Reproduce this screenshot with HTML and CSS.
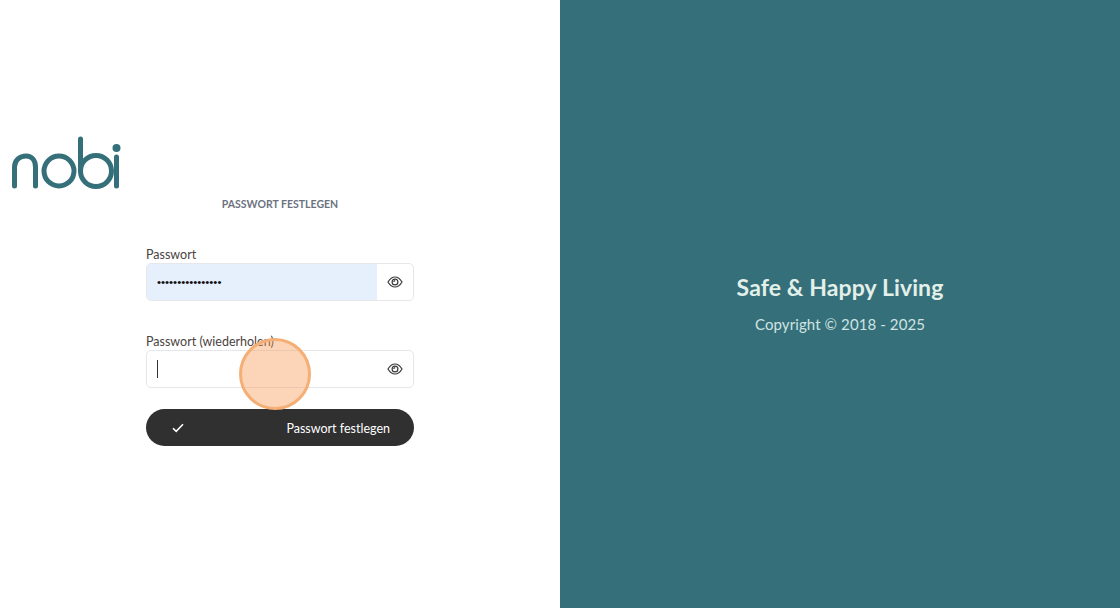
FILE: index.html
```html
<!DOCTYPE html>
<html lang="de">
<head>
<meta charset="utf-8">
<title>Passwort festlegen</title>
<link rel="stylesheet" href="styles.css">
</head>
<body>
<main class="split">
  <section class="left">
    <svg class="logo" width="112" height="56" viewBox="0 0 112 56" fill="none" stroke="#35707a" stroke-width="5" stroke-linecap="round" aria-label="nobi">
      <path d="M3.500 51V32C3.500 25 9 21 15 21C21 21 24.500 25.500 24.500 32V51"/>
      <circle cx="48" cy="36" r="15"/>
      <path d="M69.500 4V36"/>
      <circle cx="85" cy="36" r="15.500"/>
      <path d="M105.500 22V51"/>
      <circle cx="105.500" cy="13" r="4" fill="#35707a" stroke="none"/>
    </svg>
    <h1 class="title">PASSWORT FESTLEGEN</h1>
    <form class="form">
      <label class="label">Passwort</label>
      <div class="field">
        <div class="input filled"><span class="dots">••••••••••••••••</span></div>
        <span class="eye">
          <svg width="16" height="14" viewBox="0 0 16 14" fill="none" stroke="#3a3a3a" stroke-width="1.2"><path d="M1 7C3 3.600 5.400 2 8 2s5 1.600 7 5c-2 3.400-4.400 5-7 5S3 10.400 1 7z"/><circle cx="8" cy="7" r="2.900"/><path d="M6.800 7A1.400 1.400 0 0 1 8.200 5.600"/></svg>
        </span>
      </div>
      <label class="label second">Passwort (wiederholen)</label>
      <div class="field">
        <div class="input"><span class="caret"></span></div>
        <span class="eye">
          <svg width="16" height="14" viewBox="0 0 16 14" fill="none" stroke="#3a3a3a" stroke-width="1.2"><path d="M1 7C3 3.600 5.400 2 8 2s5 1.600 7 5c-2 3.400-4.400 5-7 5S3 10.400 1 7z"/><circle cx="8" cy="7" r="2.900"/><path d="M6.800 7A1.400 1.400 0 0 1 8.200 5.600"/></svg>
        </span>
      </div>
      <button class="button" type="button">
        <svg width="12" height="10" viewBox="0 0 12 10" fill="none" stroke="#fff" stroke-width="1.600"><path d="M1 5.200L4.200 8.400L11 1.300"/></svg>
        <span class="button-text">Passwort festlegen</span>
      </button>
    </form>
    <div class="click"></div>
  </section>
  <section class="right">
    <h2 class="slogan">Safe &amp; Happy Living</h2>
    <p class="copy">Copyright © 2018 - 2025</p>
  </section>
</main>
</body>
</html>
```
FILE: styles.css
```css
* { box-sizing: border-box; }
html, body { margin: 0; height: 100%; }
body { font-family: "Lato", "Liberation Sans", sans-serif; background: #fff; overflow: hidden; }
.split { display: grid; grid-template-columns: 560px 560px; height: 608px; }
.left { position: relative; display: flex; flex-direction: column; align-items: center; padding-top: 135px; }
.logo { align-self: flex-start; margin-left: 11px; display: block; }
.title { margin: 5px 0 0; font-size: 10.500px; line-height: 16px; font-weight: 700; color: #6b7280; }
.form { width: 268px; margin-top: 34px; display: flex; flex-direction: column; }
.label { font-size: 12.500px; line-height: 18px; color: #4a4340; height: 17px; }
.label.second { margin-top: 32px; }
.field { display: flex; height: 38px; border: 1px solid #e5e7eb; border-radius: 5px; overflow: hidden; background: #fff; }
.input { flex: 1; display: flex; align-items: center; padding-left: 10px; }
.input.filled { background: #e6f0fd; }
.dots { font-family: "Liberation Sans", sans-serif; font-size: 11.500px; color: #111; }
.caret { width: 1px; height: 18px; background: #333; }
.eye { width: 36px; display: flex; align-items: center; justify-content: center; }
.button { margin-top: 21px; height: 37px; border: 0; border-radius: 19px; background: #303030; color: #fff; display: flex; align-items: center; justify-content: space-between; padding: 0 24px 0 26px; font: inherit; font-size: 12.500px; }
.button-text { padding-top: 1px; }
.click { position: absolute; left: 239px; top: 338px; width: 72px; height: 72px; border-radius: 50%; background: rgba(247, 150, 80, 0.4); border: 3px solid #f5ae74; }
.right { background: #35707a; display: flex; flex-direction: column; align-items: center; justify-content: center; color: #e3efe9; padding-bottom: 2px; }
.slogan { margin: 0; font-size: 23px; line-height: 30px; font-weight: 700; letter-spacing: 0.1px; }
.copy { margin: 11px 0 0; font-size: 15px; line-height: 22px; color: #cfe3e2; letter-spacing: 0.1px; }
```
